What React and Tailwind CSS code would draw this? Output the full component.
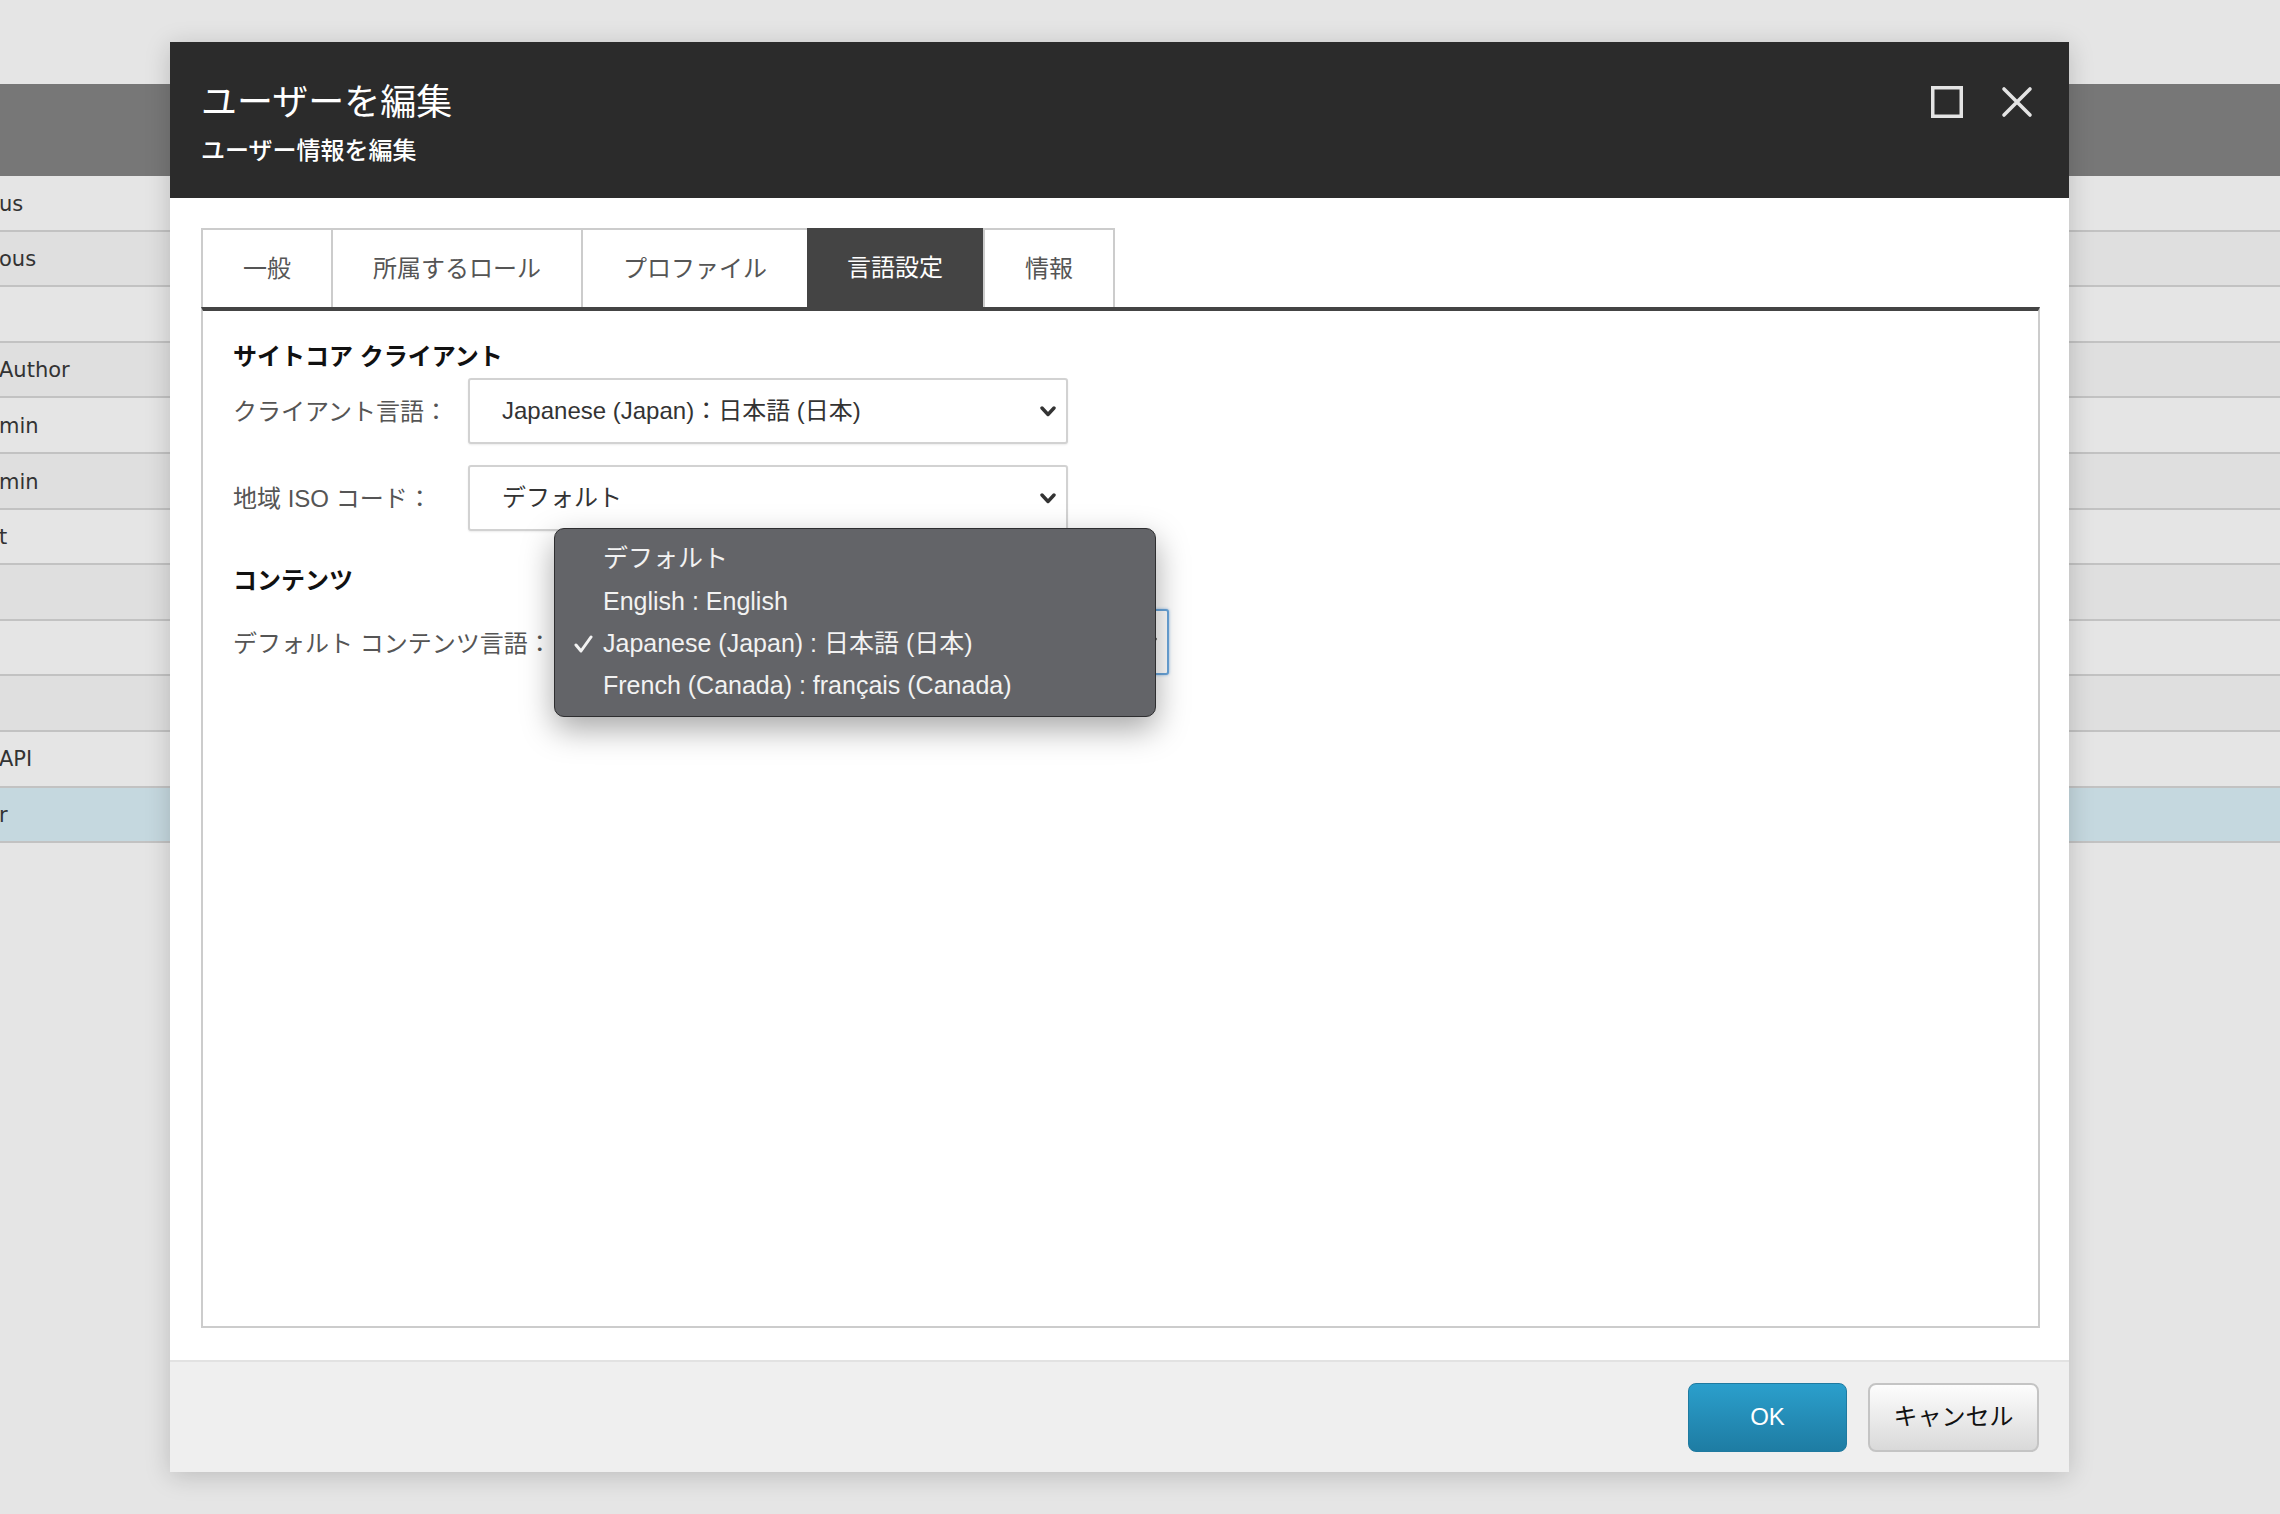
import React from "react";

const jp = "font-['Liberation_Sans','Noto_Sans_CJK_JP',sans-serif]";

// rows of the user list behind the dialog
const rows = [
  { text: "us", bg: "bg-[#e5e5e5]" },
  { text: "ous", bg: "bg-[#dfdfdf]" },
  { text: "", bg: "bg-[#e5e5e5]" },
  { text: "Author", bg: "bg-[#dfdfdf]" },
  { text: "min", bg: "bg-[#e5e5e5]" },
  { text: "min", bg: "bg-[#dfdfdf]" },
  { text: "t", bg: "bg-[#e5e5e5]" },
  { text: "", bg: "bg-[#dfdfdf]" },
  { text: "", bg: "bg-[#e5e5e5]" },
  { text: "", bg: "bg-[#dfdfdf]" },
  { text: "API", bg: "bg-[#e5e5e5]" },
  { text: "r", bg: "bg-[#c5d8df]" },
];

const tabs = ["一般", "所属するロール", "プロファイル", "言語設定", "情報"];

const options = [
  "デフォルト",
  "English : English",
  "Japanese (Japan) : 日本語 (日本)",
  "French (Canada) : français (Canada)",
];

const Chevron = () => (
  <svg width="16" height="11" viewBox="0 0 16 11" className="shrink-0">
    <polyline points="2,2 8,8.5 14,2" fill="none" stroke="#333" strokeWidth="3.4" strokeLinecap="round" strokeLinejoin="round" />
  </svg>
);

const SelectBox = ({ value, focused }) => (
  <div
    className={`flex h-[66px] w-[600px] items-center justify-between rounded-[3px] border-2 bg-white pl-[32px] pr-[10px] text-[24px] text-[#333] ${
      focused
        ? "border-[#6aa6dc] shadow-[0_0_3px_rgba(70,140,210,0.6)]"
        : "border-[#d2d2d2] shadow-[0_1px_2px_rgba(0,0,0,0.08)]"
    }`}
  >
    <span>{value}</span>
    <Chevron />
  </div>
);

const App = () => {
  return (
    <div className="relative h-[1514px] w-[2280px] overflow-hidden bg-[#e5e5e5]">
      {/* Background list */}
      <div className="pt-[84px] font-['DejaVu_Sans',sans-serif] text-[21px] text-[#333]">
        <div className="h-[92px] bg-[#777777]" />
        {rows.map((r, i) => (
          <div key={i} className={`flex h-[55.6px] items-center border-b-2 border-[#c2c2c2] pt-[3px] ${r.bg}`}>
            <span className="-ml-[1px]">{r.text}</span>
          </div>
        ))}
      </div>

      {/* Dialog */}
      <div className={`absolute left-[170px] top-[42px] flex h-[1430px] w-[1899px] flex-col bg-white shadow-[0_4px_24px_rgba(0,0,0,0.18)] ${jp}`}>
        {/* Header */}
        <div className="flex h-[156px] shrink-0 items-start justify-between bg-[#2b2b2b] pl-[31px] pr-[36px]">
          <div className="pt-[39px] text-white">
            <div className="text-[36px] leading-[44px]">ユーザーを編集</div>
            <div className="mt-[10px] text-[24px] font-medium leading-[32px]">ユーザー情報を編集</div>
          </div>
          <div className="flex items-center gap-[38px] pt-[44px]">
            <svg width="32" height="32" viewBox="0 0 32 32">
              <rect x="1.75" y="1.75" width="28.5" height="28.5" fill="none" stroke="#e4e4e4" strokeWidth="3.5" />
            </svg>
            <svg width="32" height="32" viewBox="0 0 32 32">
              <path d="M3 3 L29 29 M29 3 L3 29" stroke="#e4e4e4" strokeWidth="3.6" strokeLinecap="round" />
            </svg>
          </div>
        </div>

        {/* Body */}
        <div className="flex flex-1 flex-col pb-[32px] pl-[31px] pr-[29px] pt-[30px]">
          {/* Tabs */}
          <div className="flex h-[79px]">
            {tabs.map((t, i) => {
              const active = t === "言語設定";
              return (
                <div
                  key={t}
                  className={`flex items-center px-[40px] text-[24px] ${
                    active
                      ? "bg-[#444444] text-white"
                      : `border-l-2 border-t-2 border-[#cccccc] text-[#555] ${i === tabs.length - 1 ? "border-r-2" : ""}`
                  }`}
                >
                  {t}
                </div>
              );
            })}
          </div>

          {/* Panel */}
          <div className="flex-1 border-2 border-t-4 border-[#cccccc] border-t-[#444444] pl-[30px]">
            <div className="mt-[30px] text-[24px] font-bold leading-[32px] text-[#111]">サイトコア クライアント</div>

            <div className="mt-[5px] flex items-center">
              <div className="w-[235px] pt-[2px] text-[24px] text-[#555]">クライアント言語：</div>
              <SelectBox value="Japanese (Japan)：日本語 (日本)" />
            </div>
            <div className="mt-[21px] flex items-center">
              <div className="w-[235px] pt-[2px] text-[24px] text-[#555]">地域 ISO コード：</div>
              <SelectBox value="デフォルト" />
            </div>

            <div className="mt-[34px] text-[24px] font-bold leading-[32px] text-[#111]">コンテンツ</div>

            <div className="mt-[12px] flex items-center">
              <div className="w-[336px] pt-[4px] text-[24px] text-[#555]">デフォルト コンテンツ言語：</div>
              <div className="relative">
                <SelectBox value="Japanese (Japan)：日本語 (日本)" focused />
                {/* Open native menu */}
                <div className="absolute left-[-15px] top-[-81px] w-[602px] rounded-[10px] border border-[#2e2e30] bg-[#636468] py-[9px] shadow-[0_12px_32px_rgba(0,0,0,0.35)]">
                  {options.map((o, i) => (
                    <div key={o} className="flex h-[42.3px] items-center text-[25px] text-[#f2f2f2]">
                      <span className="flex w-[48px] justify-end pr-[10px]">
                        {i === 2 && (
                          <svg width="19" height="18" viewBox="0 0 19 18">
                            <path d="M2 10 L7 16 L17 2" fill="none" stroke="#f2f2f2" strokeWidth="3" strokeLinecap="round" strokeLinejoin="round" />
                          </svg>
                        )}
                      </span>
                      <span>{o}</span>
                    </div>
                  ))}
                </div>
              </div>
            </div>
          </div>
        </div>

        {/* Footer */}
        <div className="flex h-[112px] shrink-0 items-center justify-end gap-[21px] border-t-2 border-[#e2e2e2] bg-[#efefef] pr-[30px]">
          <button className="h-[69px] w-[159px] rounded-[8px] border border-[#1f7aa0] bg-gradient-to-b from-[#2b9fcc] to-[#1e7ca3] text-[24px] text-white">
            OK
          </button>
          <button className="h-[69px] w-[171px] rounded-[8px] border-2 border-[#c4c4c4] bg-gradient-to-b from-[#fdfdfd] to-[#d9d9d9] text-[24px] text-[#111]">
            キャンセル
          </button>
        </div>
      </div>
    </div>
  );
};

export default App;
